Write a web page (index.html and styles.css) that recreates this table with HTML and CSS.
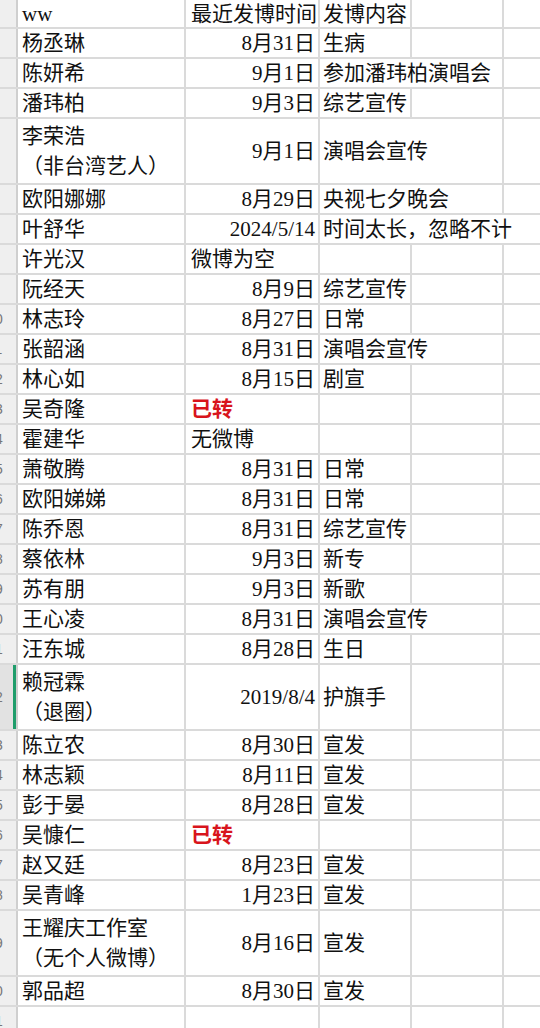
FILE: index.html
```html
<!DOCTYPE html>
<html lang="zh-CN">
<head>
<meta charset="utf-8">
<title>发博时间表</title>
<link rel="stylesheet" href="styles.css">
</head>
<body>
<div class="sheet">
  <div class="row head">
    <div class="rh"><span>1</span></div>
    <div class="c a latin">ww</div>
    <div class="c b left">最近发博时间</div>
    <div class="c cc">发博内容</div>
    <div class="c d"></div>
    <div class="c e"></div>
  </div>
  <div class="row"><div class="rh"><span>2</span></div><div class="c a">杨丞琳</div><div class="c b">8月31日</div><div class="c cc">生病</div><div class="c d"></div><div class="c e"></div></div>
  <div class="row"><div class="rh"><span>3</span></div><div class="c a">陈妍希</div><div class="c b">9月1日</div><div class="c cc ov2">参加潘玮柏演唱会</div><div class="c e"></div></div>
  <div class="row"><div class="rh"><span>4</span></div><div class="c a">潘玮柏</div><div class="c b">9月3日</div><div class="c cc">综艺宣传</div><div class="c d"></div><div class="c e"></div></div>
  <div class="row tall"><div class="rh"><span>5</span></div><div class="c a two"><span>李荣浩</span><span>（非台湾艺人）</span></div><div class="c b">9月1日</div><div class="c cc ov2">演唱会宣传</div><div class="c e"></div></div>
  <div class="row"><div class="rh"><span>6</span></div><div class="c a">欧阳娜娜</div><div class="c b">8月29日</div><div class="c cc ov2">央视七夕晚会</div><div class="c e"></div></div>
  <div class="row"><div class="rh"><span>7</span></div><div class="c a">叶舒华</div><div class="c b">2024/5/14</div><div class="c cc ov3">时间太长，忽略不计</div></div>
  <div class="row"><div class="rh"><span>8</span></div><div class="c a">许光汉</div><div class="c b left">微博为空</div><div class="c cc"></div><div class="c d"></div><div class="c e"></div></div>
  <div class="row"><div class="rh"><span>9</span></div><div class="c a">阮经天</div><div class="c b">8月9日</div><div class="c cc">综艺宣传</div><div class="c d"></div><div class="c e"></div></div>
  <div class="row"><div class="rh"><span>10</span></div><div class="c a">林志玲</div><div class="c b">8月27日</div><div class="c cc">日常</div><div class="c d"></div><div class="c e"></div></div>
  <div class="row"><div class="rh"><span>11</span></div><div class="c a">张韶涵</div><div class="c b">8月31日</div><div class="c cc ov2">演唱会宣传</div><div class="c e"></div></div>
  <div class="row"><div class="rh"><span>12</span></div><div class="c a">林心如</div><div class="c b">8月15日</div><div class="c cc">剧宣</div><div class="c d"></div><div class="c e"></div></div>
  <div class="row"><div class="rh"><span>13</span></div><div class="c a">吴奇隆</div><div class="c b left red">已转</div><div class="c cc"></div><div class="c d"></div><div class="c e"></div></div>
  <div class="row"><div class="rh"><span>14</span></div><div class="c a">霍建华</div><div class="c b left">无微博</div><div class="c cc"></div><div class="c d"></div><div class="c e"></div></div>
  <div class="row"><div class="rh"><span>15</span></div><div class="c a">萧敬腾</div><div class="c b">8月31日</div><div class="c cc">日常</div><div class="c d"></div><div class="c e"></div></div>
  <div class="row"><div class="rh"><span>16</span></div><div class="c a">欧阳娣娣</div><div class="c b">8月31日</div><div class="c cc">日常</div><div class="c d"></div><div class="c e"></div></div>
  <div class="row"><div class="rh"><span>17</span></div><div class="c a">陈乔恩</div><div class="c b">8月31日</div><div class="c cc">综艺宣传</div><div class="c d"></div><div class="c e"></div></div>
  <div class="row"><div class="rh"><span>18</span></div><div class="c a">蔡依林</div><div class="c b">9月3日</div><div class="c cc">新专</div><div class="c d"></div><div class="c e"></div></div>
  <div class="row"><div class="rh"><span>19</span></div><div class="c a">苏有朋</div><div class="c b">9月3日</div><div class="c cc">新歌</div><div class="c d"></div><div class="c e"></div></div>
  <div class="row"><div class="rh"><span>20</span></div><div class="c a">王心凌</div><div class="c b">8月31日</div><div class="c cc ov2">演唱会宣传</div><div class="c e"></div></div>
  <div class="row"><div class="rh"><span>21</span></div><div class="c a">汪东城</div><div class="c b">8月28日</div><div class="c cc">生日</div><div class="c d"></div><div class="c e"></div></div>
  <div class="row tall"><div class="rh sel"><span>22</span></div><div class="c a two"><span>赖冠霖</span><span>（退圈）</span></div><div class="c b">2019/8/4</div><div class="c cc">护旗手</div><div class="c d"></div><div class="c e"></div></div>
  <div class="row"><div class="rh"><span>23</span></div><div class="c a">陈立农</div><div class="c b">8月30日</div><div class="c cc">宣发</div><div class="c d"></div><div class="c e"></div></div>
  <div class="row"><div class="rh"><span>24</span></div><div class="c a">林志颖</div><div class="c b">8月11日</div><div class="c cc">宣发</div><div class="c d"></div><div class="c e"></div></div>
  <div class="row"><div class="rh"><span>25</span></div><div class="c a">彭于晏</div><div class="c b">8月28日</div><div class="c cc">宣发</div><div class="c d"></div><div class="c e"></div></div>
  <div class="row"><div class="rh"><span>26</span></div><div class="c a">吴慷仁</div><div class="c b left red">已转</div><div class="c cc"></div><div class="c d"></div><div class="c e"></div></div>
  <div class="row"><div class="rh"><span>27</span></div><div class="c a">赵又廷</div><div class="c b">8月23日</div><div class="c cc">宣发</div><div class="c d"></div><div class="c e"></div></div>
  <div class="row"><div class="rh"><span>28</span></div><div class="c a">吴青峰</div><div class="c b">1月23日</div><div class="c cc">宣发</div><div class="c d"></div><div class="c e"></div></div>
  <div class="row tall"><div class="rh"><span>29</span></div><div class="c a two"><span>王耀庆工作室</span><span>（无个人微博）</span></div><div class="c b">8月16日</div><div class="c cc">宣发</div><div class="c d"></div><div class="c e"></div></div>
  <div class="row"><div class="rh"><span>30</span></div><div class="c a">郭品超</div><div class="c b">8月30日</div><div class="c cc">宣发</div><div class="c d"></div><div class="c e"></div></div>
  <div class="row"><div class="rh"><span>31</span></div><div class="c a"></div><div class="c b"></div><div class="c cc"></div><div class="c d"></div><div class="c e"></div></div>
</div>
</body>
</html>
```

FILE: styles.css
```css
* { box-sizing: border-box; }
html, body { margin: 0; padding: 0; background: #ffffff; }
body {
  font-family: "Liberation Serif", "Noto Sans CJK SC", serif;
  font-size: 21px;
  color: #111111;
  overflow: hidden;
}
.sheet {
  width: 540px;
  overflow: hidden;
}
.row {
  display: flex;
  height: 30px;
  border-bottom: 2px solid #dadada;
}
.row.head { height: 29px; }
.row.tall { height: 66px; }
.rh {
  width: 18px;
  flex: none;
  background: #efefef;
  border-right: 2px solid #cfcfcf;
  display: flex;
  justify-content: flex-start;
  align-items: center;
  overflow: hidden;
  font-family: "Liberation Sans", sans-serif;
  font-size: 14px;
  color: #777777;
}
.rh span {
  flex: none;
  width: 40px;
  margin-left: -25px;
  text-align: center;
  white-space: nowrap;
}
.rh.sel {
  background: #e2e2e2;
  box-shadow: inset -3px 0 0 #1f9d6b;
}
.c {
  flex: none;
  display: flex;
  align-items: center;
  border-right: 2px solid #dadada;
  white-space: nowrap;
  overflow: hidden;
  line-height: 28px;
}
.a { width: 168px; padding-left: 4px; }
.b { width: 134px; justify-content: flex-end; padding-right: 3px; }
.b.left { justify-content: flex-start; padding-left: 5px; padding-right: 0; }
.cc { width: 92px; padding-left: 3px; }
.cc.ov2 { width: 184px; }
.cc.ov3 { flex: 1; border-right: none; }
.d { width: 92px; }
.e { flex: 1; border-right: none; }
.two {
  flex-direction: column;
  align-items: flex-start;
  justify-content: center;
}
.two span { line-height: 30px; height: 30px; }
.latin { font-family: "Liberation Serif", serif; }
.red { color: #d8141c; font-weight: bold; }
.row.head .c { padding-top: 1px; }
```
